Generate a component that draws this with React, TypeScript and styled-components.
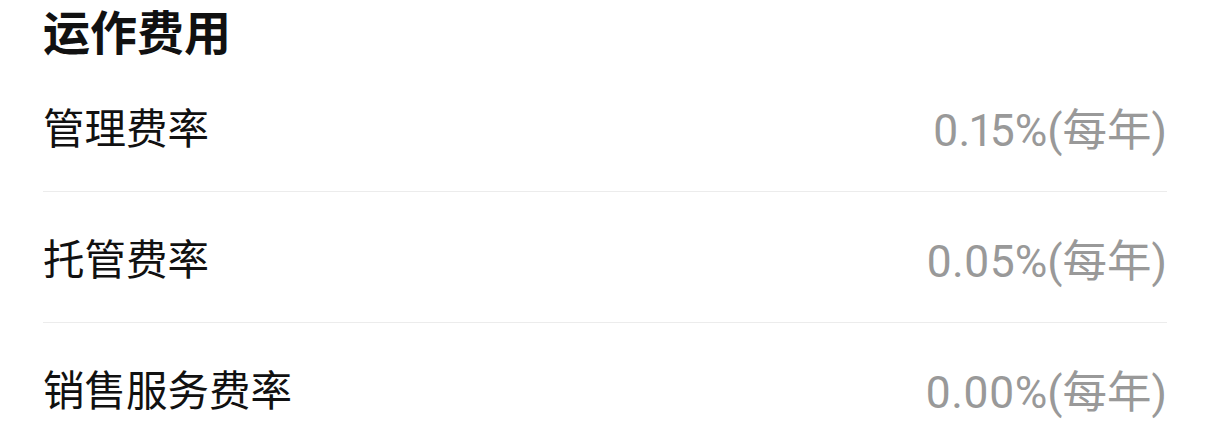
import React from "react"
import styled, {createGlobalStyle} from "styled-components"

const GlobalStyle = createGlobalStyle`
  html, body {
    margin: 0;
    padding: 0;
    background: #ffffff;
  }
  body {
    font-family: Roboto, "Noto Sans CJK SC", sans-serif;
  }
`;

const Section = styled.section`
  padding: 0 43px;
  background: #ffffff;
`;

const Title = styled.h2`
  margin: 0;
  padding-top: 2px;
  height: 59px;
  line-height: 56px;
  font-size: 47px;
  font-weight: 700;
  color: #111111;
  font-family: "Noto Sans CJK SC", sans-serif;
`;

const List = styled.ul`
  list-style: none;
  margin: 0;
  padding: 0;
`;

const Row = styled.li`
  display: flex;
  align-items: center;
  justify-content: space-between;
  height: 130px;
  border-bottom: 1px solid #ececec;
  &:last-child {
    border-bottom: none;
  }
`;

const Label = styled.span`
  font-family: "Noto Sans CJK SC", sans-serif;
  font-size: 41.5px;
  color: #111111;
`;

const Value = styled.span`
  font-family: Roboto, "Noto Sans CJK SC", sans-serif;
  font-size: 44.5px;
  font-feature-settings: "pnum";
  font-variant-numeric: proportional-nums;
  color: #999999;
`;

const fees = [
    {name: "管理费率", rate: "0.15%"},
    {name: "托管费率", rate: "0.05%"},
    {name: "销售服务费率", rate: "0.00%"},
];

export default function App() {
    return (
        <>
            <GlobalStyle/>
            <Section>
                <Title>运作费用</Title>
                <List>
                    {fees.map(f => (
                        <Row key={f.name}>
                            <Label>{f.name}</Label>
                            <Value>{f.rate}(每年)</Value>
                        </Row>
                    ))}
                </List>
            </Section>
        </>
    )
}
